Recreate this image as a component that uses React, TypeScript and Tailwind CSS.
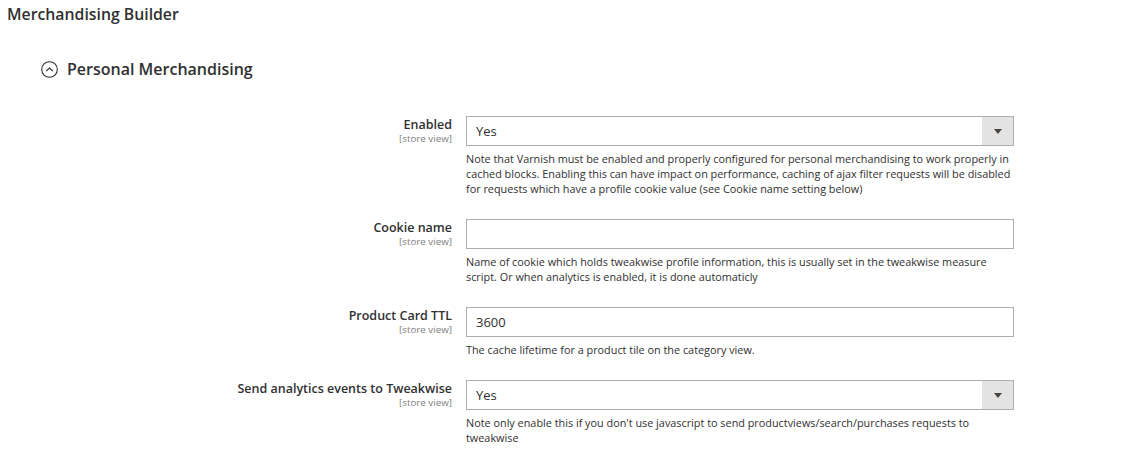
import { type ReactNode } from 'react'

const FONT = "font-['Open_Sans','Noto_Sans',sans-serif]"

interface Field {
  label: string
  kind: 'select' | 'text'
  value: string
  note: string
}

const FIELDS: Field[] = [
  {
    label: 'Enabled',
    kind: 'select',
    value: 'Yes',
    note: 'Note that Varnish must be enabled and properly configured for personal merchandising to work properly in cached blocks. Enabling this can have impact on performance, caching of ajax filter requests will be disabled for requests which have a profile cookie value (see Cookie name setting below)',
  },
  {
    label: 'Cookie name',
    kind: 'text',
    value: '',
    note: 'Name of cookie which holds tweakwise profile information, this is usually set in the tweakwise measure script. Or when analytics is enabled, it is done automaticly',
  },
  {
    label: 'Product Card TTL',
    kind: 'text',
    value: '3600',
    note: 'The cache lifetime for a product tile on the category view.',
  },
  {
    label: 'Send analytics events to Tweakwise',
    kind: 'select',
    value: 'Yes',
    note: "Note only enable this if you don't use javascript to send productviews/search/purchases requests to tweakwise",
  },
]

function Control({ field }: { field: Field }) {
  if (field.kind === 'select') {
    return (
      <div className="flex h-[30px] border border-[#adadad] bg-white">
        <span className="flex-1 pl-[9px] text-[13px] leading-[28px] text-[#303030]">{field.value}</span>
        <span className="flex w-[31px] items-center justify-center bg-[#e3e3e3]">
          <svg width="8" height="5" viewBox="0 0 8 5">
            <path d="M0 0h8L4 5z" fill="#4a4440" />
          </svg>
        </span>
      </div>
    )
  }
  return (
    <div className="h-[30px] border border-[#adadad] bg-white pl-[9px] text-[13px] leading-[28px] text-[#303030]">
      {field.value}
    </div>
  )
}

function Row({ field, children }: { field: Field; children?: ReactNode }) {
  return (
    <div className="flex gap-[14px]">
      <div className="w-[452px] shrink-0 pt-[1px] text-right">
        <div className="text-[12.5px] font-semibold leading-[16px] text-[#303030]">{field.label}</div>
        <div className="text-[9.8px] leading-[12px] text-[#808080]">[store view]</div>
      </div>
      <div className="w-[548px]">
        <Control field={field} />
        <p className="mt-[5px] text-[10.85px] leading-[15px] text-[#303030]">{field.note}</p>
        {children}
      </div>
    </div>
  )
}

export default function App() {
  return (
    <div className={`h-[462px] w-[1130px] overflow-hidden bg-white ${FONT}`}>
      <h1 className="pl-[7px] pt-[5px] text-[15.8px] font-semibold leading-[18px] text-[#303030]">
        Merchandising Builder
      </h1>
      <div className="mt-[36px] flex items-center gap-[9px] pl-[41px]">
        <svg width="17" height="17" viewBox="0 0 17 17">
          <circle cx="8.5" cy="8.5" r="7.8" fill="none" stroke="#303030" strokeWidth="1.1" />
          <path d="M5.3 10l3.2-3 3.2 3" fill="none" stroke="#303030" strokeWidth="1.1" />
        </svg>
        <h2 className="text-[16px] font-semibold leading-[20px] text-[#303030]">Personal Merchandising</h2>
      </div>
      <div className="mt-[37px] flex flex-col gap-[23px]">
        {FIELDS.map((f) => (
          <Row key={f.label} field={f} />
        ))}
      </div>
    </div>
  )
}
